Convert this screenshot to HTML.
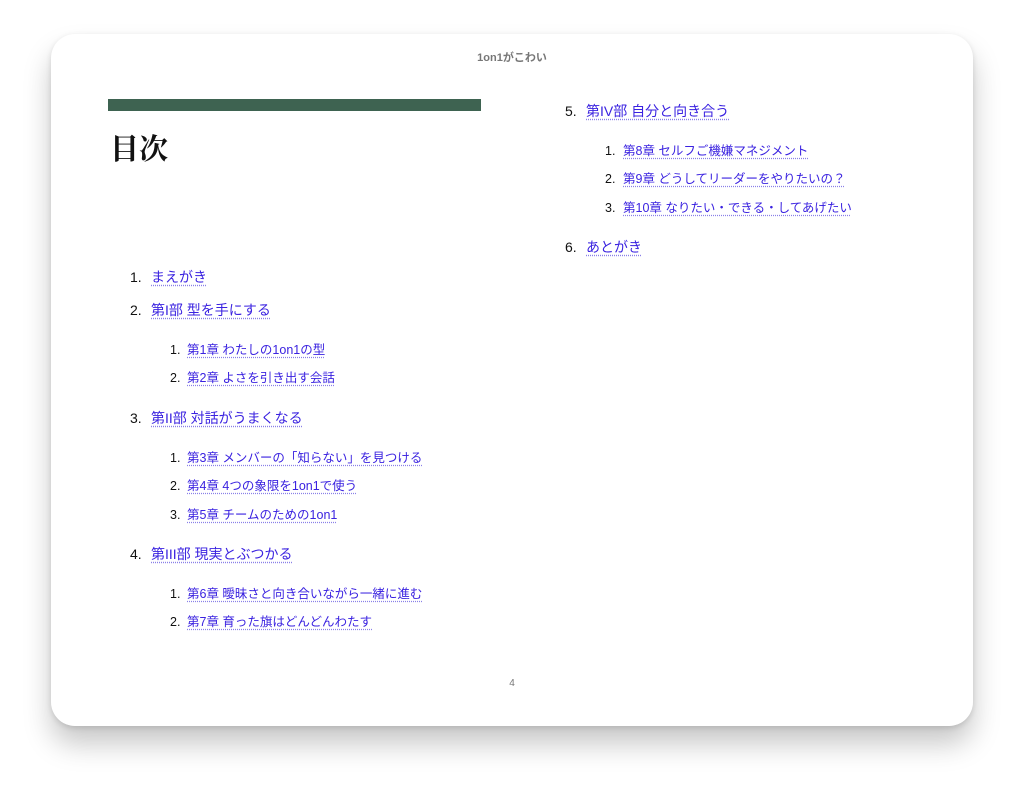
<!DOCTYPE html>
<html><head><meta charset="utf-8"><style>
html,body{margin:0;padding:0;width:1024px;height:793px;background:#fff;overflow:hidden}
body{font-family:"Liberation Sans","Noto Sans CJK JP",sans-serif;position:relative}
.card{position:absolute;left:51px;top:34px;width:922px;height:692px;border-radius:24px;background:#fff;box-shadow:0 18px 28px rgba(0,0,0,.22),0 2px 6px rgba(0,0,0,.12)}
.t{position:absolute;white-space:nowrap;line-height:1}
.n{color:#111}
a{color:#3a22e0;text-decoration:underline dotted #8a80e8;text-underline-offset:3px}
.L{font-size:14px}.S{font-size:12.5px}
.w{position:absolute;left:0;top:2px;width:1024px;height:793px}
</style></head><body>
<div class="card"></div>
<div class="t" style="left:0;width:1024px;text-align:center;top:53px;font-size:11px;font-weight:bold;color:#777">1on1がこわい</div>
<div style="position:absolute;left:108px;top:99px;width:373px;height:12px;background:#3e6351"></div>
<div class="t" style="left:110px;top:136px;font-size:29px;font-weight:bold;font-family:'Liberation Serif','Noto Serif CJK SC',serif;color:#111">目次</div>
<div class="w">
<div class="t L n" style="left:130px;top:268px">1.</div><div class="t L" style="left:151px;top:268px"><a>まえがき</a></div>
<div class="t L n" style="left:130px;top:301px">2.</div><div class="t L" style="left:151px;top:301px"><a>第I部 型を手にする</a></div>
<div class="t S n" style="left:170px;top:342px">1.</div><div class="t S" style="left:187px;top:342px"><a>第1章 わたしの1on1の型</a></div>
<div class="t S n" style="left:170px;top:370px">2.</div><div class="t S" style="left:187px;top:370px"><a>第2章 よさを引き出す会話</a></div>
<div class="t L n" style="left:130px;top:409px">3.</div><div class="t L" style="left:151px;top:409px"><a>第II部 対話がうまくなる</a></div>
<div class="t S n" style="left:170px;top:450px">1.</div><div class="t S" style="left:187px;top:450px"><a>第3章 メンバーの「知らない」を見つける</a></div>
<div class="t S n" style="left:170px;top:478px">2.</div><div class="t S" style="left:187px;top:478px"><a>第4章 4つの象限を1on1で使う</a></div>
<div class="t S n" style="left:170px;top:507px">3.</div><div class="t S" style="left:187px;top:507px"><a>第5章 チームのための1on1</a></div>
<div class="t L n" style="left:130px;top:545px">4.</div><div class="t L" style="left:151px;top:545px"><a>第III部 現実とぶつかる</a></div>
<div class="t S n" style="left:170px;top:586px">1.</div><div class="t S" style="left:187px;top:586px"><a>第6章 曖昧さと向き合いながら一緒に進む</a></div>
<div class="t S n" style="left:170px;top:614px">2.</div><div class="t S" style="left:187px;top:614px"><a>第7章 育った旗はどんどんわたす</a></div>

<div class="t L n" style="left:565px;top:102px">5.</div><div class="t L" style="left:586px;top:102px"><a>第IV部 自分と向き合う</a></div>
<div class="t S n" style="left:605px;top:143px">1.</div><div class="t S" style="left:623px;top:143px"><a>第8章 セルフご機嫌マネジメント</a></div>
<div class="t S n" style="left:605px;top:171px">2.</div><div class="t S" style="left:623px;top:171px"><a>第9章 どうしてリーダーをやりたいの？</a></div>
<div class="t S n" style="left:605px;top:200px">3.</div><div class="t S" style="left:623px;top:200px"><a>第10章 なりたい・できる・してあげたい</a></div>
<div class="t L n" style="left:565px;top:238px">6.</div><div class="t L" style="left:586px;top:238px"><a>あとがき</a></div>
</div>
<div class="t" style="left:0;width:1024px;text-align:center;top:679px;font-size:10px;color:#777">4</div>
</body></html>
